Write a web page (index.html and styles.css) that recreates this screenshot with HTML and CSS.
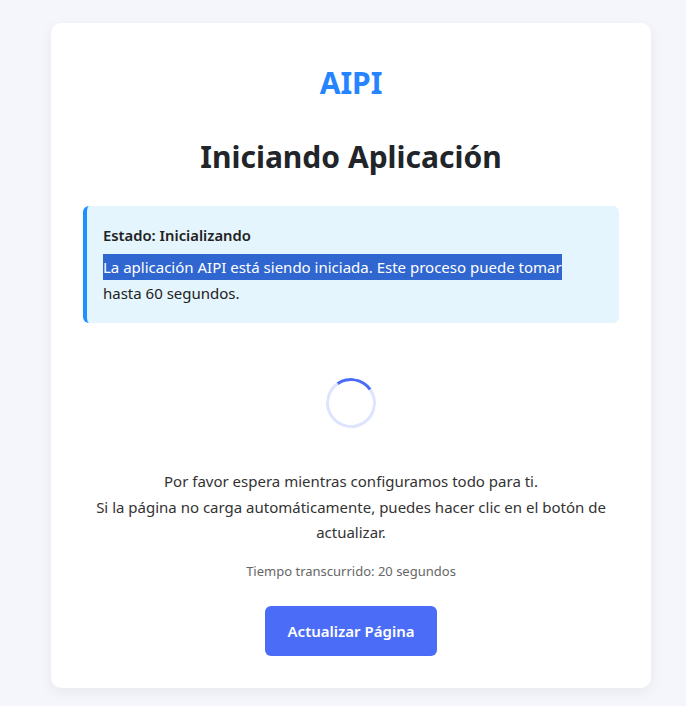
FILE: index.html
```html
<!DOCTYPE html>
<html lang="es">
<head>
<meta charset="utf-8">
<title>Iniciando Aplicación</title>
<link rel="stylesheet" href="styles.css">
</head>
<body>
<main class="card">
  <div class="logo">AIPI</div>
  <h1 class="title">Iniciando Aplicación</h1>
  <div class="status">
    <p class="status-label">Estado: Inicializando</p>
    <p class="status-text"><span class="selected">La aplicación AIPI está siendo iniciada. Este proceso puede tomar</span> hasta 60 segundos.</p>
  </div>
  <div class="spinner-wrap"><div class="spinner"></div></div>
  <p class="message">Por favor espera mientras configuramos todo para ti.<br>Si la página no carga automáticamente, puedes hacer clic en el botón de actualizar.</p>
  <p class="elapsed">Tiempo transcurrido: 20 segundos</p>
  <div class="actions"><button class="btn">Actualizar Página</button></div>
</main>
</body>
</html>
```
FILE: styles.css
```css
html, body {
  margin: 0;
  padding: 0;
}
body {
  background: #f5f6fb;
  font-family: "Noto Sans", "Open Sans", sans-serif;
  color: #333;
  padding-top: 23px;
  padding-bottom: 18px;
}
.card {
  width: 600px;
  box-sizing: border-box;
  margin-left: 51px;
  background: #fff;
  border-radius: 10px;
  box-shadow: 0 4px 14px rgba(0, 0, 0, 0.06);
  padding: 40px 32px 32px;
  text-align: center;
}
.logo {
  color: #2684ff;
  font-weight: 700;
  font-size: 30px;
  line-height: 40px;
  margin-bottom: 32px;
}
.title {
  margin: 0 0 27px;
  font-size: 30px;
  line-height: 44px;
  font-weight: 700;
  color: #212529;
}
.status {
  text-align: left;
  background: #e4f5fd;
  border-left: 4px solid #1e90ff;
  border-radius: 6px;
  padding: 18px 16px 17px;
}
.status-label {
  margin: 0 0 8px;
  font-size: 14.8px;
  font-weight: 600;
  line-height: 22px;
  color: #222;
}
.status-text {
  margin: 0;
  font-size: 15px;
  line-height: 26px;
  color: #222;
}
.selected {
  background: #2f66d0;
  color: #fff;
  padding: 3px 0;
}
.spinner-wrap {
  display: flex;
  justify-content: center;
  padding: 55px 0 41px;
}
.spinner {
  width: 44px;
  height: 44px;
  border: 3px solid #dde4fd;
  border-top-color: #4a6cf7;
  border-radius: 50%;
  transform: rotate(10deg);
}
.message {
  margin: 0 0 15px;
  font-size: 15px;
  line-height: 25.5px;
  color: #333;
}
.elapsed {
  margin: 0 0 25px;
  font-size: 13px;
  line-height: 20px;
  color: #666;
}
.actions {
  display: flex;
  justify-content: center;
}
.btn {
  background: #4a6cf7;
  color: #fff;
  border: none;
  border-radius: 6px;
  font-family: inherit;
  font-weight: 600;
  font-size: 15px;
  width: 172px;
  height: 50px;
}
```
